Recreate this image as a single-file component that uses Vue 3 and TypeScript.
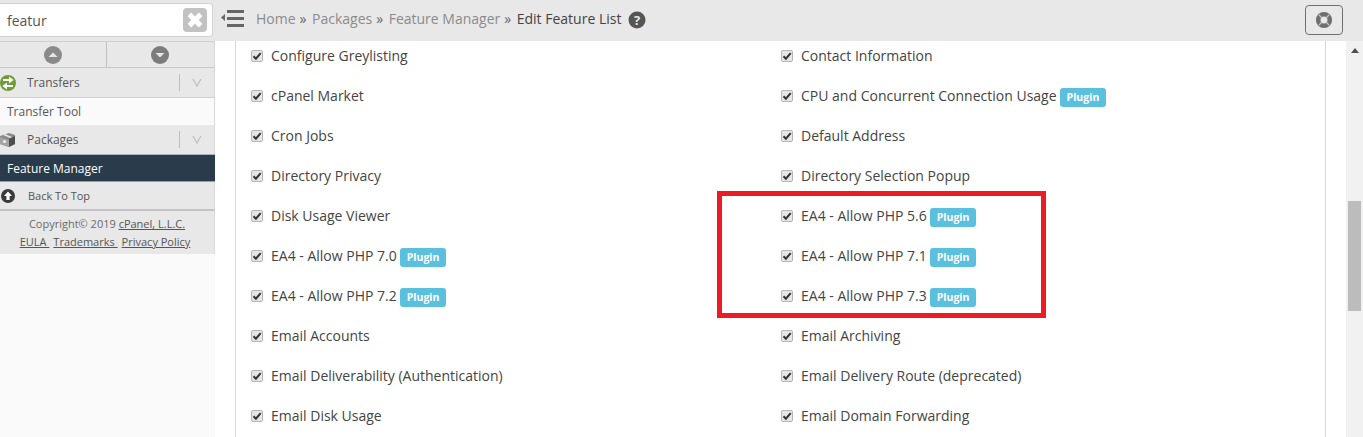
<template>
  <div class="page">
    <header class="topbar">
      <div class="search-cell">
        <div class="search-box">
          <span class="search-text">featur</span>
          <span class="clear-btn">
            <svg width="18" height="18" viewBox="0 0 16 16"><path d="M3 3l10 10M13 3L3 13" stroke="#fff" stroke-width="4.4" /></svg>
          </span>
        </div>
      </div>
      <svg class="menu-toggle" width="24" height="18" viewBox="0 0 24 18">
        <path d="M0 8.5L4 5v7z" fill="#666" />
        <rect x="6" y="1" width="17" height="3" fill="#666" />
        <rect x="6" y="8" width="17" height="3" fill="#666" />
        <rect x="6" y="15" width="17" height="3" fill="#666" />
      </svg>
      <nav class="crumbs">
        <template v-for="c in crumbs" :key="c">
          <span class="crumb">{{ c }}</span>
          <span class="sep">»</span>
        </template>
        <span class="crumb-current">Edit Feature List</span>
        <svg class="help" width="18" height="18" viewBox="0 0 18 18">
          <circle cx="9" cy="9" r="8.5" fill="#555" />
          <text x="9" y="13.5" text-anchor="middle" class="help-mark">?</text>
        </svg>
      </nav>
      <button class="support-btn">
        <svg width="18" height="18" viewBox="0 0 18 18">
          <circle cx="9" cy="9" r="5.8" fill="none" stroke="#6f6f6f" stroke-width="4.6" />
          <path d="M4 4l3 3M14 4l-3 3M4 14l3-3M14 14l-3-3" stroke="#c9c9c9" stroke-width="1.2" />
        </svg>
      </button>
    </header>

    <div class="body">
      <aside class="sidebar">
        <div class="arrows">
          <span class="arrow-cell">
            <svg width="18" height="18" viewBox="0 0 18 18"><circle cx="9" cy="9" r="9" fill="#8a8a8a" /><path d="M4.5 11L9 6.5l4.5 4.5z" fill="#e6e6e6" /></svg>
          </span>
          <span class="arrow-cell">
            <svg width="18" height="18" viewBox="0 0 18 18"><circle cx="9" cy="9" r="9" fill="#7c7c7c" /><path d="M4.5 7L9 11.5 13.5 7z" fill="#e6e6e6" /></svg>
          </span>
        </div>
        <div class="group">
          <svg class="group-icon" width="16" height="16" viewBox="0 0 16 16">
            <circle cx="8" cy="8" r="8" fill="#6f9c35" />
            <path d="M3 4h6V1.6L13.6 5 9 8.4V6H3zM13 10H7V7.6L2.4 11 7 14.4V12h6z" fill="#fff" />
          </svg>
          <span class="group-label">Transfers</span>
          <span class="chevron">
            <svg width="10" height="9" viewBox="0 0 10 9"><path d="M1 1l4 7 4-7" fill="none" stroke="#bdbdbd" stroke-width="1.2" /></svg>
          </span>
        </div>
        <div class="item">Transfer Tool</div>
        <div class="group packages">
          <svg class="group-icon" width="16" height="16" viewBox="0 0 16 16">
            <path d="M0 4l9-3 6 2v9l-6 3-9-3z" fill="#8a8a8a" />
            <path d="M0 5l9 3v7l-9-3z" fill="#a3a3a3" />
            <path d="M9 7l6-3v8l-6 3z" fill="#4f4f4f" />
            <path d="M3 3l7 3 2-1-7-3z" fill="#e4e4e4" />
            <circle cx="4.5" cy="9.5" r="1.6" fill="#eee" />
          </svg>
          <span class="group-label">Packages</span>
          <span class="chevron">
            <svg width="10" height="9" viewBox="0 0 10 9"><path d="M1 1l4 7 4-7" fill="none" stroke="#bdbdbd" stroke-width="1.2" /></svg>
          </span>
        </div>
        <div class="item active">Feature Manager</div>
        <div class="back-top">
          <svg class="group-icon" width="14" height="14" viewBox="0 0 14 14">
            <circle cx="7" cy="7" r="7" fill="#3a3a3a" />
            <path d="M7 2.6L11 7H8.6v4H5.4V7H3z" fill="#fff" />
          </svg>
          <span>Back To Top</span>
        </div>
        <footer class="side-foot">
          <div>Copyright© 2019 <a>cPanel, L.L.C.</a></div>
          <div class="foot-links"><a class="eula">EULA&nbsp;</a><a>Trademarks&nbsp;</a><a>Privacy Policy</a></div>
        </footer>
        <div class="side-fill"></div>
      </aside>

      <main class="content">
        <div class="panel">
          <div class="features">
            <label v-for="f in features" :key="f.name" class="feature">
              <span class="check">
                <svg width="10" height="10" viewBox="0 0 10 10"><path d="M1.5 5.2l2.4 2.5 4.8-5.6" fill="none" stroke="#333" stroke-width="2" /></svg>
              </span>
              <span class="feature-name">{{ f.name }}</span>
              <span v-if="f.plugin" class="plugin">Plugin</span>
            </label>
          </div>
        </div>
        <div class="highlight"></div>
      </main>

      <div class="scrollbar">
        <svg class="scroll-up" width="8" height="5" viewBox="0 0 10 6"><path d="M0 6l5-6 5 6z" fill="#505050" /></svg>
        <div class="thumb"></div>
      </div>
    </div>
  </div>
</template>

<script setup lang="ts">
interface Feature {
  name: string
  plugin?: boolean
}

const crumbs = ['Home', 'Packages', 'Feature Manager']

const features: Feature[] = [
  { name: 'Configure Greylisting' },
  { name: 'Contact Information' },
  { name: 'cPanel Market' },
  { name: 'CPU and Concurrent Connection Usage', plugin: true },
  { name: 'Cron Jobs' },
  { name: 'Default Address' },
  { name: 'Directory Privacy' },
  { name: 'Directory Selection Popup' },
  { name: 'Disk Usage Viewer' },
  { name: 'EA4 - Allow PHP 5.6', plugin: true },
  { name: 'EA4 - Allow PHP 7.0', plugin: true },
  { name: 'EA4 - Allow PHP 7.1', plugin: true },
  { name: 'EA4 - Allow PHP 7.2', plugin: true },
  { name: 'EA4 - Allow PHP 7.3', plugin: true },
  { name: 'Email Accounts' },
  { name: 'Email Archiving' },
  { name: 'Email Deliverability (Authentication)' },
  { name: 'Email Delivery Route (deprecated)' },
  { name: 'Email Disk Usage' },
  { name: 'Email Domain Forwarding' },
]
</script>

<style>
html,
body {
  margin: 0;
  overflow: hidden;
}
</style>

<style scoped>
.page {
  width: 1363px;
  height: 437px;
  overflow: hidden;
  display: flex;
  flex-direction: column;
  background: #fff;
  font-family: 'Open Sans', sans-serif;
  color: #333;
}
.topbar {
  height: 41px;
  flex: none;
  display: flex;
  align-items: center;
  background: #e8e8e8;
}
.search-cell {
  width: 214px;
  flex: none;
  height: 41px;
  padding-top: 3px;
  box-sizing: border-box;
}
.search-box {
  width: 213px;
  height: 34px;
  box-sizing: border-box;
  background: #fff;
  border: 1px solid #d4d4d4;
  border-left: 0;
  border-radius: 0 4px 4px 0;
  display: flex;
  align-items: center;
  justify-content: space-between;
  padding: 0 5px 0 7px;
}
.search-text {
  font-size: 14px;
  color: #555;
}
.clear-btn {
  width: 24px;
  height: 24px;
  border-radius: 4px;
  background: #c2c2c2;
  display: flex;
  align-items: center;
  justify-content: center;
}
.menu-toggle {
  margin-left: 7px;
  margin-top: -6px;
  flex: none;
}
.crumbs {
  margin-left: 11px;
  margin-top: -5px;
  display: flex;
  align-items: center;
  font-size: 14px;
  color: #8a8a8a;
  flex: 1;
}
.crumb {
  color: #8b8b8b;
}
.sep {
  color: #666;
  margin: 0 5.5px 0 4px;
}
.crumb-current {
  color: #444;
}
.help {
  margin-left: 7px;
  margin-top: 4px;
}
.help-mark {
  font-family: 'Open Sans', sans-serif;
  font-weight: 700;
  font-size: 13px;
  fill: #e8e8e8;
}
.support-btn {
  width: 38px;
  height: 30px;
  margin-right: 20px;
  margin-top: -2px;
  padding: 0;
  box-sizing: border-box;
  background: transparent;
  border: 1px solid #6f6f6f;
  border-radius: 4px;
  display: flex;
  align-items: center;
  justify-content: center;
}
.body {
  flex: 1;
  display: flex;
  min-height: 0;
}
.sidebar {
  width: 215px;
  flex: none;
  display: flex;
  flex-direction: column;
  font-size: 12px;
  color: #555;
  background: #e8e8e8;
}
.arrows {
  display: flex;
  height: 27px;
  border-top: 1px solid #d0d0d0;
  border-bottom: 1px solid #c8c8c8;
  border-right: 1px solid #d8d8d8;
  box-sizing: border-box;
  flex: none;
}
.arrow-cell {
  flex: none;
  width: 106px;
  display: flex;
  align-items: center;
  justify-content: center;
}
.arrow-cell:first-child {
  border-right: 1px solid #c0c0c0;
}
.group {
  height: 30px;
  box-sizing: border-box;
  display: flex;
  align-items: center;
  border-bottom: 1px solid #d0d0d0;
  border-right: 1px solid #d8d8d8;
  flex: none;
}
.group.packages {
  height: 29px;
  border-bottom: 0;
}
.group-icon {
  margin-left: 0;
  flex: none;
}
.group-label {
  margin-left: 11px;
  flex: 1;
  color: #555;
}
.chevron {
  width: 33px;
  height: 17px;
  border-left: 1px solid #bfbfbf;
  display: flex;
  align-items: center;
  justify-content: center;
  margin-right: 1px;
}
.item {
  height: 27px;
  line-height: 27px;
  padding-left: 7px;
  background: #fafafa;
  border-right: 1px solid #d8d8d8;
  flex: none;
  color: #555;
}
.item.active {
  line-height: 28px;
  background: #2a3b4c;
  color: #fff;
  border-top: 1px solid #a9b5bd;
  box-sizing: border-box;
  border-bottom: 1px solid #8fa0aa;
  border-right: 0;
  height: 28px;
}
.back-top {
  height: 27px;
  display: flex;
  align-items: center;
  gap: 13px;
  font-size: 11px;
  border-bottom: 2px solid #c4c4c4;
  border-right: 1px solid #d8d8d8;
  flex: none;
  box-sizing: content-box;
  color: #555;
}
.back-top .group-icon {
  margin-left: 1px;
}
.side-foot {
  height: 43px;
  flex: none;
  box-sizing: border-box;
  padding-top: 4px;
  text-align: center;
  font-size: 11px;
  line-height: 18px;
  color: #6a6a6a;
  border-right: 1px solid #d8d8d8;
}
.side-foot a {
  color: #555;
  text-decoration: underline;
}
.foot-links a {
  margin-right: 4px;
}
.side-fill {
  flex: 1;
  background: #fafafa;
}
.content {
  flex: 1;
  position: relative;
  overflow: hidden;
  padding-left: 20px;
  padding-right: 20px;
  min-width: 0;
}
.panel {
  height: 100%;
  border-left: 1px solid #d8d8d8;
  border-right: 1px solid #d8d8d8;
  box-sizing: border-box;
  overflow: hidden;
  padding-left: 15px;
}
.features {
  display: grid;
  grid-template-columns: 530px 530px;
  grid-auto-rows: 40px;
  margin-top: -5px;
}
.feature {
  display: flex;
  align-items: center;
  font-size: 14px;
  color: #444;
  white-space: nowrap;
}
.feature-name {
  margin-bottom: 2px;
}
.check {
  width: 12px;
  height: 12px;
  flex: none;
  box-sizing: border-box;
  border: 1px solid #b5b5b5;
  border-radius: 2px;
  background: #e6e6e6;
  display: flex;
  align-items: center;
  justify-content: center;
  margin-right: 8px;
}
.plugin {
  margin-left: 3px;
  height: 19px;
  line-height: 19px;
  padding: 0 7px;
  border-radius: 3px;
  background: #5bc0de;
  color: #fff;
  font-size: 10.5px;
  font-weight: 700;
  margin-top: 2px;
}
.highlight {
  position: absolute;
  left: 502px;
  top: 150px;
  width: 329px;
  height: 127px;
  box-sizing: border-box;
  border: 5px solid #ed1c24;
}
.scrollbar {
  width: 17px;
  flex: none;
  background: #f1f1f1;
  position: relative;
}
.scroll-up {
  position: absolute;
  left: 5px;
  top: 7px;
}
.thumb {
  position: absolute;
  left: 2px;
  top: 160px;
  width: 13px;
  height: 110px;
  background: #bcbcbc;
}
</style>
